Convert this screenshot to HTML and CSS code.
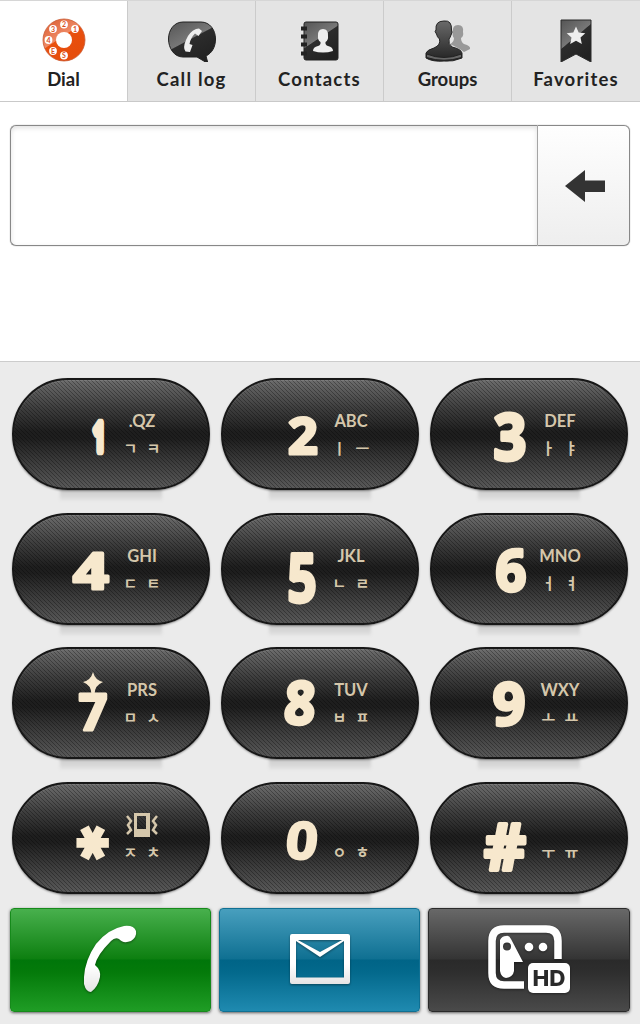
FILE: index.html
```html
<!DOCTYPE html>
<html lang="en">
<head>
  <meta charset="utf-8">
  <meta name="viewport" content="width=device-width, initial-scale=1">
  <title>Dial</title>
  <link rel="stylesheet" href="styles.css">
</head>
<body>

<!-- Shared gradients -->
<svg class="defs" width="0" height="0">
  <defs>
    <linearGradient id="dark" x1="0" y1="0" x2="0" y2="1">
      <stop offset="0" stop-color="#6a6a6a"/>
      <stop offset="1" stop-color="#222"/>
    </linearGradient>
    <linearGradient id="gloss" x1="0" y1="0" x2="0.6" y2="1">
      <stop offset="0" stop-color="#555"/>
      <stop offset="0.5" stop-color="#777"/>
      <stop offset="0.52" stop-color="#2c2c2c"/>
      <stop offset="1" stop-color="#222"/>
    </linearGradient>
    <linearGradient id="orange" x1="0" y1="0" x2="0.6" y2="0.9">
      <stop offset="0" stop-color="#d9572b"/>
      <stop offset="0.55" stop-color="#ee8a66"/>
      <stop offset="0.57" stop-color="#e9500f"/>
      <stop offset="1" stop-color="#e64d0c"/>
    </linearGradient>
    <linearGradient id="white" x1="0" y1="0" x2="0" y2="1">
      <stop offset="0.6" stop-color="#fff"/>
      <stop offset="1" stop-color="#e4e4e4"/>
    </linearGradient>
  </defs>
</svg>

<nav class="tabs">
  <a class="tab active" href="#">
    <svg width="44" height="44" viewBox="0 0 44 44">
      <circle cx="22" cy="22" r="21" fill="url(#orange)" stroke="#c95a34" stroke-width="0.8"/>
      <circle cx="22" cy="22" r="8" fill="#fff"/>
      <g fill="#fff">
        <circle cx="22" cy="6.5" r="3.9"/><circle cx="33" cy="11" r="3.9"/><circle cx="11" cy="11" r="3.9"/>
        <circle cx="6.5" cy="22" r="3.9"/><circle cx="11" cy="33" r="3.9"/><circle cx="22" cy="37.5" r="3.9"/>
      </g>
      <g class="dots">
        <text x="22" y="9">2</text><text x="33" y="13.5">1</text><text x="11" y="13.5">3</text>
        <text x="6.5" y="24.5">4</text><text x="11" y="35.5">E</text><text x="22" y="40">S</text>
      </g>
    </svg>
    <span class="short">Dial</span>
  </a>
  <a class="tab" href="#">
    <svg width="48" height="44" viewBox="0 0 48 44">
      <path d="M15 4H33C42 4 47.500 12 47.500 21C47.500 29 44 35 38 38L40 45.500L29 39H15C6 39 .5 30 .5 21C.5 12 6 4 15 4Z" fill="url(#gloss)" stroke="#222"/>
      <path d="M28 11L31 10.500L34 13L30.500 18L27 15.500Q22.500 20 21.500 26L24.500 27L22 34L17.500 33.500Q14.500 30 18 22Q21 14 28 11Z" fill="#eee"/>
    </svg>
    <span>Call log</span>
  </a>
  <a class="tab" href="#">
    <svg width="40" height="44" viewBox="0 0 40 44">
      <rect x="4" y="4" width="34" height="38" rx="2" fill="url(#gloss)" stroke="#222"/>
      <path d="M1 10.500H7M1 18.500H7M1 26.500H7M1 35.500H7" stroke="#222" stroke-width="4"/>
      <path d="M23 11Q28.500 11 28 18Q28.500 22 25.500 24Q25 27 28 28Q33 29 33 33Q23 36 13 33Q13 29 18 28Q21 27 20.500 24Q17.500 22 18 18Q17.500 11 23 11Z" fill="#eee"/>
    </svg>
    <span>Contacts</span>
  </a>
  <a class="tab" href="#">
    <svg width="46" height="44" viewBox="0 0 46 44">
      <path d="M33 7Q39 7 38 14Q39 18 36 20Q36 24 39 26Q46 28 45 31L39 34Q35 31 31 29L25 26Q29 24 29 20Q27 18 28 14Q27 7 33 7Z" fill="#999"/>
      <path d="M19 3Q27 2 26.500 12Q28 14 26 17Q25 20 24 21Q23 26 27 29Q36 31 37 35V40Q28 44 19 43Q8 44 1 40V35Q2 32 9 30Q16 27 14.500 21Q12 19 11.500 16Q9 13 11 12Q10 3 19 3Z" fill="url(#dark)" stroke="#222"/>
      <path d="M1.500 36Q19 43 36.500 36V39.500Q19 45 1.500 39.500Z" fill="#666" stroke="#222"/>
    </svg>
    <span class="short">Groups</span>
  </a>
  <a class="tab" href="#">
    <svg width="32" height="44" viewBox="0 0 32 44">
      <path d="M1 2H31V44L16 36L1 44Z" fill="url(#gloss)" stroke="#2a2a2a"/>
      <path d="M16 8.500L18.700 14.500L25.300 15.200L20.500 19.500L21.800 26L16 22.800L10.200 26L11.500 19.500L6.700 15.200L13.300 14.500Z" fill="#eee"/>
    </svg>
    <span>Favorites</span>
  </a>
</nav>

<div class="display">
  <div class="number"></div>
  <button class="backspace">
    <svg width="42" height="34" viewBox="0 0 42 34">
      <path d="M1 17L21 1V11.500H41V23H21V33Z" fill="#333"/>
    </svg>
  </button>
</div>

<div class="keypad">
  <button class="key">
    <svg class="digit" viewBox="-28 -32 56 64"><text class="one" transform="translate(6 2) scale(.5 .92)" y="16">1</text></svg>
    <span class="letters">.QZ</span>
    <span class="jamo"><i>ㄱ</i><i>ㅋ</i></span>
  </button>
  <button class="key">
    <svg class="digit" viewBox="-28 -32 56 64"><text transform="translate(1 2) scale(1.04 1.02)" y="18">2</text></svg>
    <span class="letters">ABC</span>
    <span class="jamo"><i>ㅣ</i><i>ㅡ</i></span>
  </button>
  <button class="key">
    <svg class="digit" viewBox="-28 -32 56 64"><text transform="translate(-1 3) scale(1.15 1.28)" y="18">3</text></svg>
    <span class="letters">DEF</span>
    <span class="jamo"><i>ㅏ</i><i>ㅑ</i></span>
  </button>

  <button class="key">
    <svg class="digit" viewBox="-28 -32 56 64"><text transform="translate(-2 2) scale(1.25 1)" y="18">4</text></svg>
    <span class="letters">GHI</span>
    <span class="jamo"><i>ㄷ</i><i>ㅌ</i></span>
  </button>
  <button class="key">
    <svg class="digit" viewBox="-28 -32 56 64"><text transform="translate(0 9) scale(1.02 1.32)" y="18">5</text></svg>
    <span class="letters">JKL</span>
    <span class="jamo"><i>ㄴ</i><i>ㄹ</i></span>
  </button>
  <button class="key">
    <svg class="digit" viewBox="-28 -32 56 64"><text transform="translate(0 1) scale(1.08 1.15)" y="18">6</text></svg>
    <span class="letters">MNO</span>
    <span class="jamo"><i>ㅓ</i><i>ㅕ</i></span>
  </button>

  <button class="key">
    <svg class="digit" viewBox="-28 -32 56 64">
      <text transform="translate(0 9) scale(1 1)" y="18">7</text>
      <path d="M0 -31Q2 -23 10 -21Q2 -18 1.500 -9H-1.500Q-2 -18 -10 -21Q-2 -23 0 -31Z"/>
    </svg>
    <span class="letters">PRS</span>
    <span class="jamo"><i>ㅁ</i><i>ㅅ</i></span>
  </button>
  <button class="key">
    <svg class="digit" viewBox="-28 -32 56 64"><text transform="translate(-2 0) scale(1.08 1.18) skewX(-4)" y="18">8</text></svg>
    <span class="letters">TUV</span>
    <span class="jamo"><i>ㅂ</i><i>ㅍ</i></span>
  </button>
  <button class="key">
    <svg class="digit" viewBox="-28 -32 56 64"><text transform="translate(-2 1) scale(1.14 1.18)" y="18">9</text></svg>
    <span class="letters">WXY</span>
    <span class="jamo"><i>ㅗ</i><i>ㅛ</i></span>
  </button>

  <button class="key">
    <svg class="digit" viewBox="-28 -32 56 64"><text class="star" transform="translate(2 5) rotate(90)" y="32.5">*</text></svg>
    <span class="letters">
      <svg class="vibrate" width="34" height="26" viewBox="0 0 34 26">
        <path fill-rule="evenodd" d="M9 1H25V25H9ZM12 4V17H21V4Z"/>
        <path class="wave" d="M2 4L6 9L3 13L6 18L2 22M32 4L28 9L31 13L28 18L32 22"/>
      </svg>
    </span>
    <span class="jamo"><i>ㅈ</i><i>ㅊ</i></span>
  </button>
  <button class="key">
    <svg class="digit" viewBox="-28 -32 56 64"><text class="zero" transform="translate(0 2) scale(1.12 1.03) skewX(-5)" y="18">0</text></svg>
    <span class="letters"></span>
    <span class="jamo"><i>ㅇ</i><i>ㅎ</i></span>
  </button>
  <button class="key">
    <svg class="digit" viewBox="-28 -32 56 64"><text transform="translate(-6 9) scale(1.3 1.28)" y="18">#</text></svg>
    <span class="letters"></span>
    <span class="jamo"><i>ㅜ</i><i>ㅠ</i></span>
  </button>
</div>

<div class="actions">
  <button class="action call">
    <svg width="56" height="70" viewBox="0 0 56 70">
      <path d="M1 53Q2 36 13 20Q25 5 41 2Q51 1 53 7Q54 13 48 17Q40 20 36 15Q32 13 28 17Q14 31 12 41Q18 46 17 53Q15 63 8 68Q3 68 1 60Z" fill="url(#white)"/>
    </svg>
  </button>
  <button class="action message">
    <svg width="60" height="50" viewBox="0 0 60 50">
      <path fill-rule="evenodd" d="M2 0H58Q60 0 60 2V48Q60 50 58 50H2Q0 50 0 48V2Q0 0 2 0ZM6 6V43.500H54V6Z" fill="url(#white)"/>
      <path d="M6 5L30 18L54 5V7L30 23L6 7Z" fill="#fff"/>
    </svg>
  </button>
  <button class="action video">
    <svg width="82" height="68" viewBox="0 0 82 68">
      <path d="M36 60H16Q4 60 4 48V16Q4 4 16 4H58Q70 4 70 16V34" fill="none" stroke="#fff" stroke-width="7.500"/>
      <path fill-rule="evenodd" d="M12 15Q14 11 18 11Q21 10 23 14L35 37H26V46Q25 52 18 53Q13 52 12 46ZM19 17.500A4 4 0 1 0 19 25.500A4 4 0 1 0 19 17.500Z" fill="#fff"/>
      <circle cx="41" cy="22" r="4.300" fill="#fff"/>
      <circle cx="55" cy="22" r="4.300" fill="#fff"/>
      <rect x="40" y="38" width="42" height="30" rx="5" fill="#fff"/>
      <text class="hd" x="61" y="60.500" textLength="33" lengthAdjust="spacingAndGlyphs">HD</text>
    </svg>
  </button>
</div>

</body>
</html>
```
FILE: styles.css
```css
body {
  margin: 0;
  width: 640px;
  height: 1024px;
  display: flex;
  flex-direction: column;
  overflow: hidden;
  background: #ebebeb;
  font-family: "Inter", "Noto Sans CJK KR", sans-serif;
}

button {
  padding: 0;
  border: none;
  font-family: inherit;
  cursor: pointer;
}

.defs {
  position: absolute;
}

/* Tabs */
.tabs {
  display: flex;
  height: 102px;
  box-sizing: border-box;
  border-top: 1px solid #d6d6d6;
  border-bottom: 1px solid #c9c9c9;
  background: #e4e4e4;
}

.tab {
  width: 128px;
  box-sizing: border-box;
  display: flex;
  flex-direction: column;
  align-items: center;
  padding-top: 17px;
  border-right: 1px solid #cbcbcb;
  color: #222;
  text-decoration: none;
  font-family: "Lato", sans-serif;
  font-size: 18.5px;
  font-weight: bold;
  line-height: 22px;
  letter-spacing: 1.2px;
}

.tab:last-child {
  border-right: none;
}

.tab.active {
  background: #fff;
}

.tab span {
  margin-top: 6px;
}

.tab .short {
  letter-spacing: 0;
}

.dots text {
  font-size: 7px;
  letter-spacing: 0;
  text-anchor: middle;
  fill: #d9501d;
}

/* Number display */
.display {
  display: flex;
  height: 259px;
  box-sizing: border-box;
  padding: 23px 10px 115px;
  background: #fff;
}

.number {
  flex: 1;
  border: 1px solid #888;
  border-right-color: #aaa;
  border-radius: 6px 0 0 6px;
  box-shadow: inset 0 2px 5px rgba(0, 0, 0, 0.12), 0 0 1px #777;
}

.backspace {
  width: 92px;
  box-sizing: border-box;
  display: flex;
  align-items: center;
  justify-content: center;
  padding-left: 3px;
  border: 1px solid #888;
  border-left: none;
  border-radius: 0 6px 6px 0;
  background: linear-gradient(#fefefe, #eee);
  box-shadow: 0 0 1px #777;
}

/* Keypad */
.keypad {
  display: grid;
  grid-template-columns: repeat(3, 198px);
  grid-auto-rows: 112px;
  gap: 22.5px 11px;
  padding: 16px 12px 0;
  border-top: 1px solid #ccc;
}

.key {
  position: relative;
  display: grid;
  grid-template-columns: 56px 42px;
  grid-template-rows: 26px 26px;
  align-content: start;
  box-sizing: border-box;
  padding: 29px 0 0 51px;
  border: 2px solid #171717;
  border-radius: 56px;
  background:
    linear-gradient(45deg, rgba(0, 0, 0, 0.3) 12.5%, transparent 12.5%, transparent 50%, rgba(0, 0, 0, 0.3) 50%, rgba(0, 0, 0, 0.3) 62.5%, transparent 62.5%) 0 0 / 4px 4px,
    linear-gradient(#6c6c6c, #3e3e3e 26%, #1e1e1e 48%, #1e1e1e 54%, #3c3c3c 76%, #585858);
  box-shadow: 0 1px 2px rgba(0, 0, 0, 0.4), inset 0 1px 1px rgba(255, 255, 255, 0.12);
}

/* soft shade under the key */
.key::after {
  content: '';
  position: absolute;
  z-index: -1;
  left: 46px;
  right: 46px;
  bottom: -12px;
  height: 12px;
  background: linear-gradient(#c4c4c4, #d4d4d4 50%, #e0e0e0);
  filter: blur(1.5px);
}

.digit {
  grid-row: 1 / 3;
  width: 56px;
  height: 64px;
  margin-top: -7px;
  overflow: visible;
  fill: #f7e8cd;
}

.digit text {
  font-family: "Noto Sans", sans-serif;
  font-size: 50px;
  font-weight: bold;
  text-anchor: middle;
  stroke: #f7e8cd;
  stroke-width: 3px;
  stroke-linejoin: round;
}

.digit .one {
  font-size: 42px;
  stroke-width: 9px;
}

.digit .star {
  font-family: "DejaVu Sans", sans-serif;
  font-size: 58px;
  stroke-width: 5px;
  stroke-linejoin: miter;
}

.digit .zero {
  stroke-width: 2px;
}

.letters {
  align-self: center;
  justify-self: center;
  margin-top: -2px;
  color: #d5c7ab;
  font-family: "Lato", sans-serif;
  font-size: 16.5px;
  font-weight: bold;
  line-height: 26px;
  text-align: center;
}

.vibrate {
  display: block;
  margin: 0 auto;
  fill: #d5c7ab;
}

.wave {
  fill: none;
  stroke: #d5c7ab;
  stroke-width: 2.5px;
}

.jamo {
  display: flex;
  justify-content: center;
  gap: 8px;
  color: #d5c7ab;
  font-family: "Noto Sans CJK KR", sans-serif;
  font-size: 15px;
  font-weight: bold;
  line-height: 26px;
}

.jamo i {
  width: 15px;
  font-style: normal;
  text-align: center;
}

/* Bottom buttons */
.actions {
  display: grid;
  grid-template-columns: 201px 201px 202px;
  gap: 8px;
  height: 104px;
  padding: 0 10px;
  margin-top: 14.5px;
}

.action {
  display: flex;
  align-items: center;
  justify-content: center;
  box-sizing: border-box;
  border-radius: 4px;
  box-shadow: 0 1px 3px rgba(0, 0, 0, 0.6);
}

.action svg {
  margin-bottom: 3px;
  filter: drop-shadow(0 1px 1px rgba(0, 0, 0, 0.4));
}

.call {
  border: 1px solid #168a1b;
  background: linear-gradient(#48b04d, #0d7f10 49%, #00760a 50%, #047a0a 62%, #1f9d25);
}

.message {
  border: 1px solid #0f7093;
  background: linear-gradient(#489fbe, #0f7092 49%, #006487 50%, #03698c 62%, #1f8ab0);
}

.video {
  border: 1px solid #2a2a2a;
  background: linear-gradient(#686868, #343434 49%, #2a2a2a 50%, #2e2e2e 62%, #4a4a4a);
}

.hd {
  font-family: "Inter", sans-serif;
  font-size: 22px;
  font-weight: 800;
  text-anchor: middle;
  fill: #2a2a2a;
}
```
